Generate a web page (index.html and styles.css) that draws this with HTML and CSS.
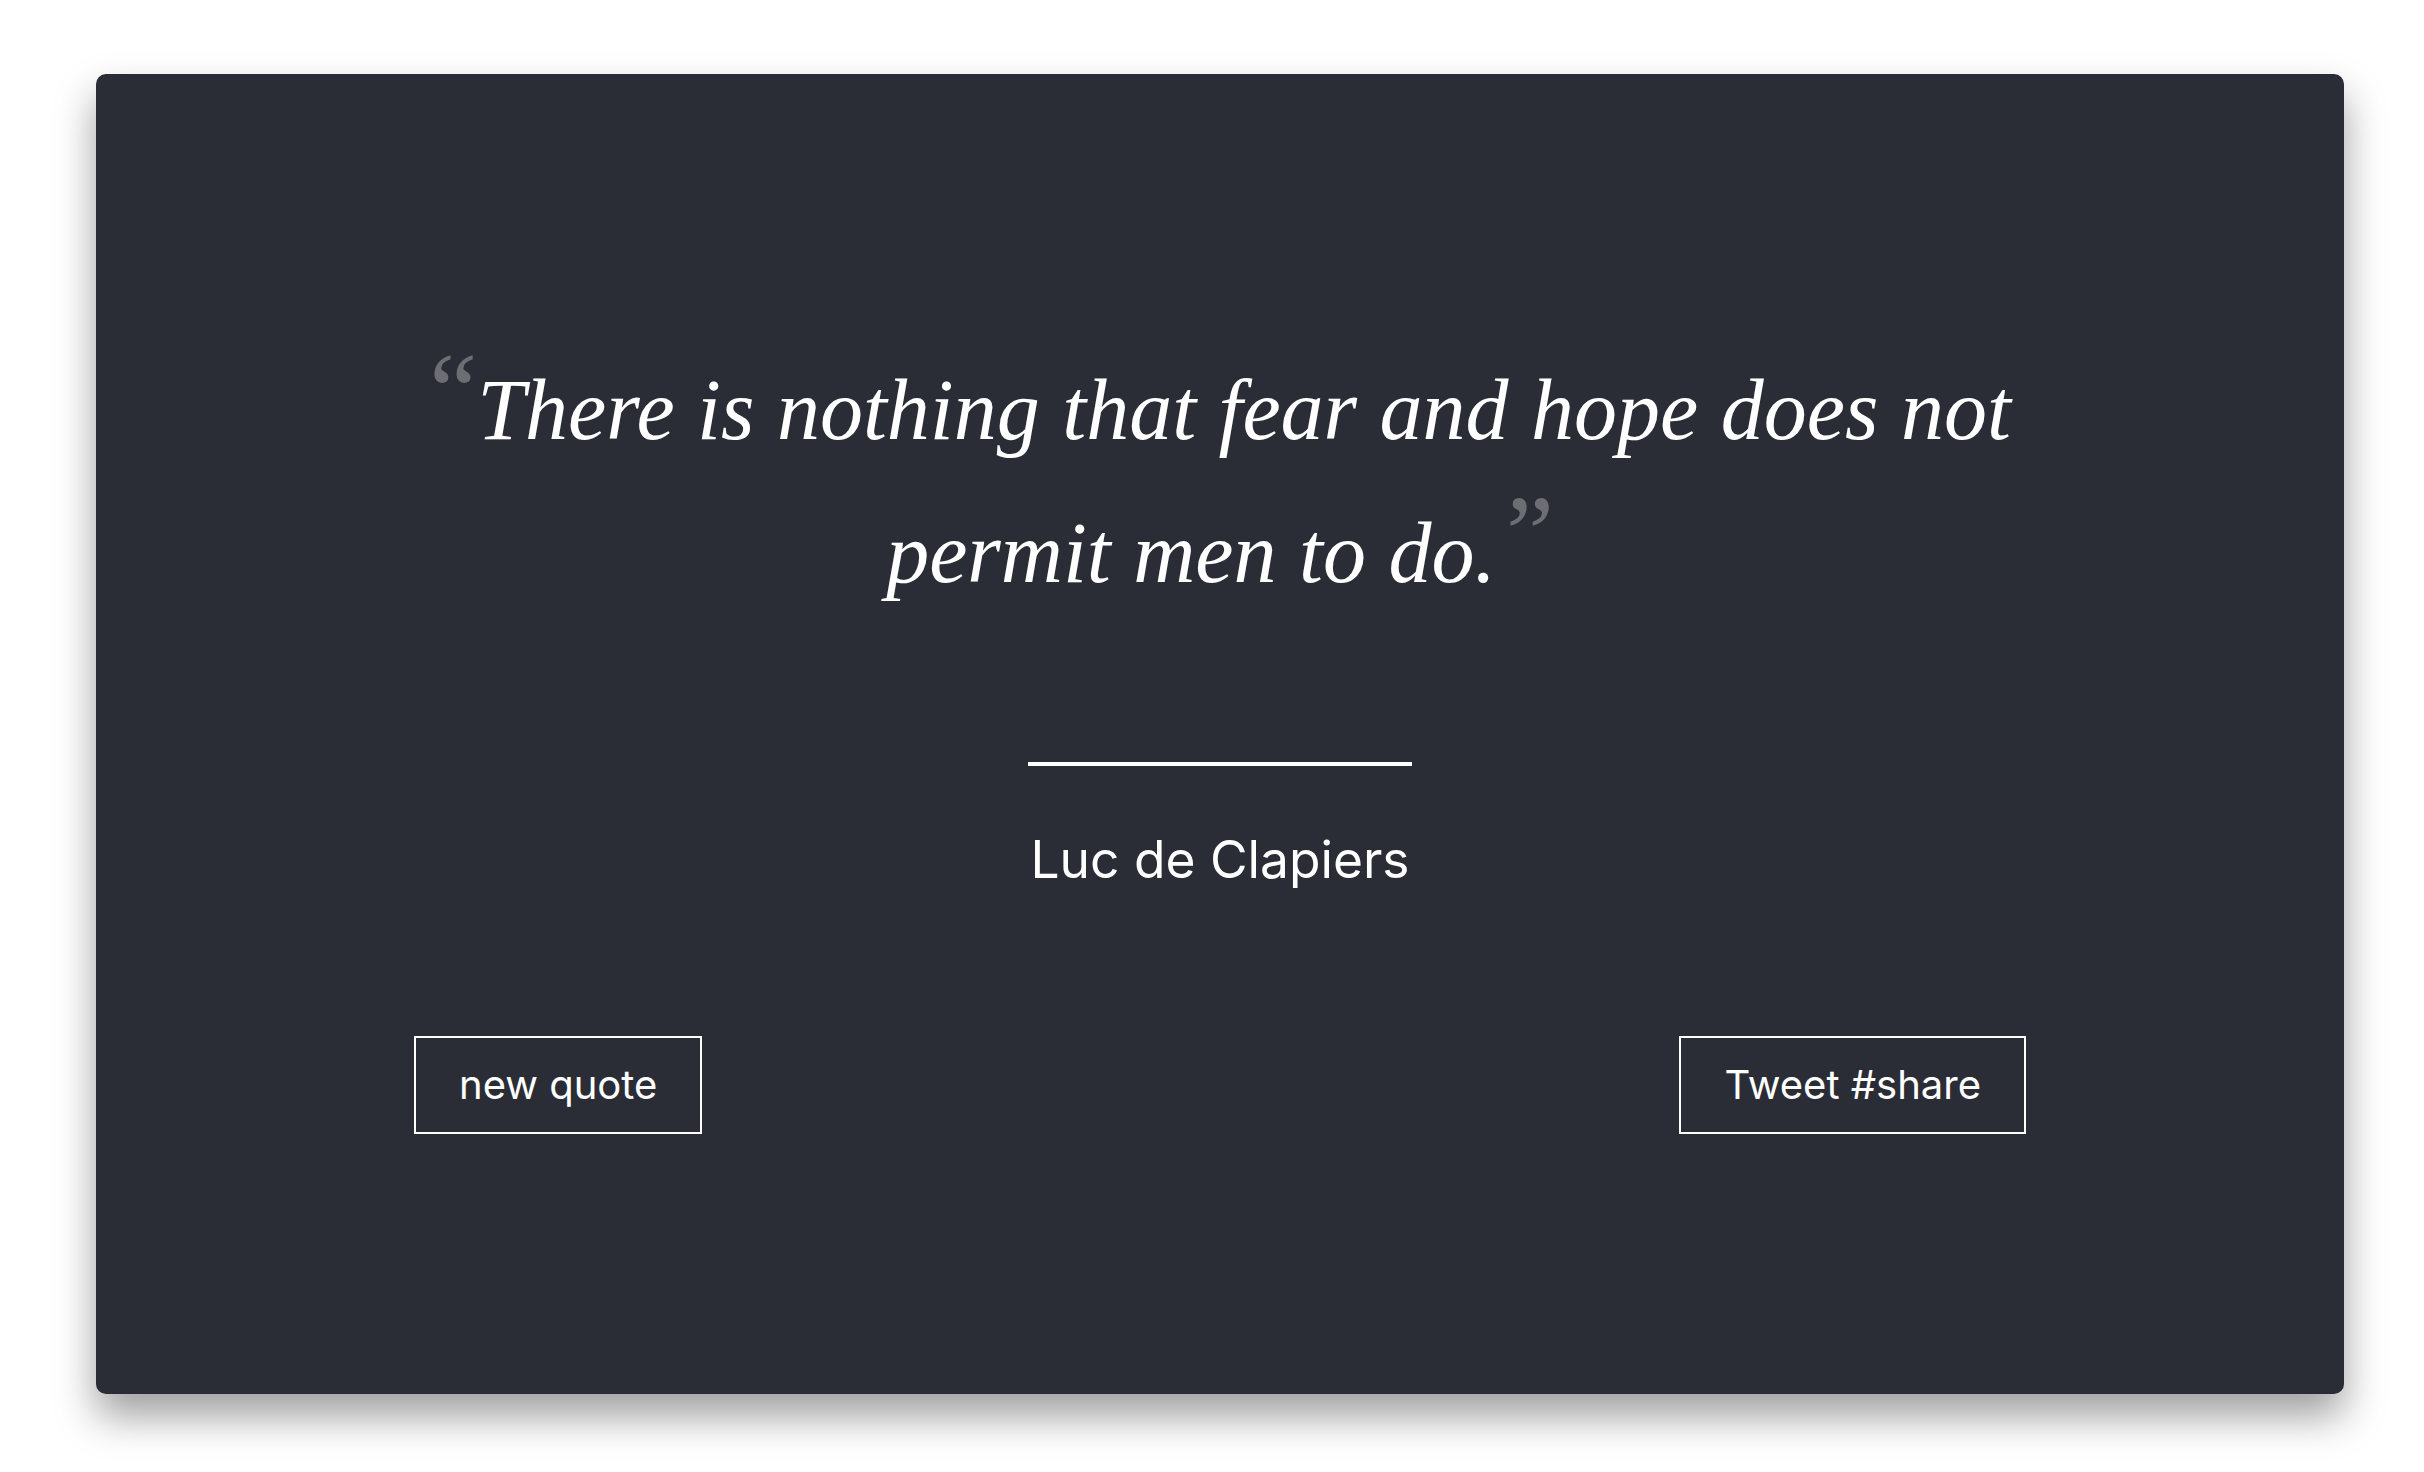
FILE: index.html
```html
<!DOCTYPE html>
<html>
<head>
<meta charset="utf-8">
<link rel="stylesheet" href="styles.css">
</head>
<body>
<main class="card">
  <blockquote class="quote"><span class="mark">&ldquo;</span>There is nothing that fear and hope does not permit men to do.<span class="mark mark-close">&rdquo;</span></blockquote>
  <hr class="divider">
  <p class="author">Luc de Clapiers</p>
  <div class="actions">
    <button class="btn">new quote</button>
    <button class="btn">Tweet #share</button>
  </div>
</main>
</body>
</html>
```
FILE: styles.css
```css
html, body {
  margin: 0;
  padding: 0;
  background: #ffffff;
}
html {
  overflow: hidden;
}
body {
  padding: 74px 0 0 96px;
  height: 1472px;
  box-sizing: border-box;
}
.card {
  box-sizing: border-box;
  width: 2248px;
  height: 1320px;
  background: #2a2d35;
  border-radius: 10px;
  box-shadow: 0 22px 40px rgba(0, 0, 0, 0.38);
  padding: 265px 318px 0;
  display: flex;
  flex-direction: column;
  align-items: center;
  color: #ffffff;
}
.quote {
  margin: 0;
  font-family: "Liberation Serif", "Times New Roman", serif;
  font-style: italic;
  font-size: 86px;
  line-height: 143px;
  text-align: center;
  word-spacing: 1px;
}
.mark {
  color: #6c6e73;
  font-size: 108px;
  line-height: 0;
  vertical-align: 12px;
  font-style: normal;
}
.mark-close {
  margin-left: 10px;
}
.divider {
  width: 384px;
  height: 4px;
  border: 0;
  background: #ffffff;
  margin: 137px 0 0;
}
.author {
  margin: 63px 0 0;
  font-family: "Inter", "Noto Sans", sans-serif;
  font-size: 51.5px;
  line-height: 60px;
}
.actions {
  align-self: stretch;
  display: flex;
  justify-content: space-between;
  margin-top: 147px;
}
.btn {
  background: transparent;
  border: 2px solid #ffffff;
  color: #ffffff;
  font-family: "Inter", "Noto Sans", sans-serif;
  font-size: 40px;
  line-height: 50px;
  padding: 22px 43px;
  border-radius: 0;
}
```
